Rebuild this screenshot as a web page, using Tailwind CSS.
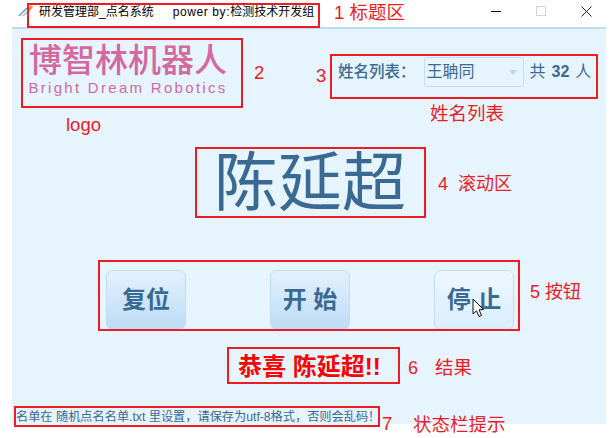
<!DOCTYPE html>
<html lang="zh">
<head>
  <meta charset="UTF-8" />
  <title>研发管理部_点名系统</title>
  <script src="https://cdn.jsdelivr.net/npm/@tailwindcss/browser@4"></script>
</head>
<body class="bg-white w-[611px] h-[438px] overflow-hidden relative font-['Liberation_Sans','Noto_Sans_CJK_SC',sans-serif]">

  <div class="ml-[12px] w-[594px]">
    <!-- 标题栏 -->
    <div class="h-[27px] flex items-center text-[12px] text-black">
      <svg class="w-[16px] h-[14px] ml-[6px] mr-[5px] -mt-[5px]" viewBox="0 0 16 14">
        <path d="M1 12 L9 4" stroke="#5b8fc7" stroke-width="1.2" fill="none"/>
        <path d="M5 12 L9 8" stroke="#9cb8d8" stroke-width="1.2" fill="none"/>
        <path d="M9 6 L13 1 L15 3 L11 8Z" fill="#e8913a"/>
      </svg>
      <span class="whitespace-nowrap -mt-[4px]">研发管理部_点名系统</span>
      <span class="ml-[19px] whitespace-nowrap -mt-[4px]"><span class="tracking-[0.6px]">power by:</span>检测技术开发组</span>
      <div class="ml-auto flex items-center -mt-[5px]">
        <div class="w-[10px] h-px bg-black mr-[35px]"></div>
        <div class="w-[10px] h-[10px] border border-gray-300 mr-[35px]"></div>
        <svg class="w-[11px] h-[11px] mr-[14px]" viewBox="0 0 11 11"><path d="M0.5 0.5 L10.5 10.5 M10.5 0.5 L0.5 10.5" stroke="#222" stroke-width="1" fill="none"/></svg>
      </div>
    </div>

    <!-- 主体 -->
    <div class="h-[397px] bg-[#e6f4fe] border-t-2 border-[#bcdcf5] flex flex-col">
      <div class="flex h-[82px] pt-[15px]">
        <div class="ml-[16px] w-[200px] flex flex-col items-center text-[#d4689f]">
          <div class="text-[33px] leading-[34px] font-medium whitespace-nowrap">博智林机器人</div>
          <div class="text-[15px] leading-[18px] tracking-[2.3px] font-medium whitespace-nowrap mt-[1px]">Bright Dream Robotics</div>
        </div>
        <div class="ml-[110px] mt-[13px] h-[30px] flex items-center text-[15.5px] text-[#3a6a94]">
          <span class="whitespace-nowrap font-medium">姓名列表：</span>
          <div class="ml-[8px] w-[100px] h-[30px] border border-[#c2dff6] rounded-[3px] flex items-center pl-[2px] pr-[6px] text-[16px]">
            <span class="whitespace-nowrap">王聃同</span>
            <div class="ml-auto w-0 h-0 border-x-[4px] border-x-transparent border-t-[5px] border-t-[#b6d8f2]"></div>
          </div>
          <div class="ml-[6px] flex gap-[6px] text-[16px] whitespace-nowrap">
            <span>共</span>
            <b>32</b>
            <span>人</span>
          </div>
        </div>
      </div>

      <!-- 滚动区 -->
      <div class="h-[77px] mt-[33px] flex items-center justify-center pl-[2px] text-[64px] leading-none text-[#3a6a94]">
        <span class="whitespace-nowrap">陈延超</span>
      </div>

      <!-- 按钮 -->
      <div class="flex gap-[84px] ml-[94px] mt-[49px]">
        <button class="w-[80px] h-[60px] rounded-[7px] border border-[#c0dcf5] bg-gradient-to-b from-[#e3f1fe] to-[#bddcf6] text-[24px] font-bold text-[#3a6a94]">复位</button>
        <button class="w-[80px] h-[60px] rounded-[7px] border border-[#c0dcf5] bg-gradient-to-b from-[#e3f1fe] to-[#bddcf6] text-[24px] font-bold text-[#3a6a94]">开 始</button>
        <button class="w-[80px] h-[60px] rounded-[7px] border border-[#c0dcf5] bg-gradient-to-b from-[#eef7ff] to-[#d9eeff] text-[24px] font-bold text-[#3a6a94]">停 止</button>
      </div>

      <!-- 结果 -->
      <div class="mt-[21px] ml-[226px] h-[32px] flex items-center text-[24px] font-bold text-[#ff0000] whitespace-nowrap">恭喜 陈延超!!</div>

      <!-- 状态栏 -->
      <div class="mt-auto h-[22px] pl-[4px] pt-[8px] flex items-center text-[12.2px] text-[#3a6a94] whitespace-nowrap">名单在 随机点名名单.txt 里设置，请保存为utf-8格式，否则会乱码！</div>
    </div>
  </div>

  <!-- 标注：红框与说明 -->
  <div class="absolute left-[27px] top-[3px] w-[293px] h-[25px] border-2 border-[#ed1c24]"></div>
  <div class="absolute left-[21px] top-[38px] w-[222px] h-[70px] border-2 border-[#ed1c24]"></div>
  <div class="absolute left-[330px] top-[54px] w-[268px] h-[45px] border-2 border-[#ed1c24]"></div>
  <div class="absolute left-[195px] top-[147px] w-[231px] h-[71px] border-2 border-[#ed1c24]"></div>
  <div class="absolute left-[98px] top-[260px] w-[422px] h-[71px] border-2 border-[#ed1c24]"></div>
  <div class="absolute left-[227px] top-[347px] w-[173px] h-[37px] border-2 border-[#ed1c24]"></div>
  <div class="absolute left-[14px] top-[406px] w-[366px] h-[21px] border-2 border-[#ed1c24]"></div>

  <div class="absolute left-[334px] top-[1px] text-[18.5px] leading-[24px] text-[#ed1c24] whitespace-nowrap">1 标题区</div>
  <div class="absolute left-[254px] top-[61px] text-[18.5px] leading-[24px] text-[#ed1c24]">2</div>
  <div class="absolute left-[316px] top-[64px] text-[18.5px] leading-[24px] text-[#ed1c24]">3</div>
  <div class="absolute left-[66px] top-[113px] text-[18.5px] leading-[24px] text-[#ed1c24]">logo</div>
  <div class="absolute left-[430px] top-[102px] text-[18.5px] leading-[24px] text-[#ed1c24] whitespace-nowrap">姓名列表</div>
  <div class="absolute left-[438px] top-[172px] text-[18px] leading-[24px] text-[#ed1c24] whitespace-nowrap">4&nbsp;&nbsp;滚动区</div>
  <div class="absolute left-[530px] top-[280px] text-[18px] leading-[24px] text-[#ed1c24] whitespace-nowrap">5 按钮</div>
  <div class="absolute left-[408px] top-[356px] text-[18px] leading-[24px] text-[#ed1c24]">6</div>
  <div class="absolute left-[435px] top-[356px] text-[18.5px] leading-[24px] text-[#ed1c24] whitespace-nowrap">结果</div>
  <div class="absolute left-[382px] top-[412px] text-[18.5px] leading-[24px] text-[#ed1c24]">7</div>
  <div class="absolute left-[413px] top-[413px] text-[18.5px] leading-[24px] text-[#ed1c24] whitespace-nowrap">状态栏提示</div>

  <!-- 鼠标指针 -->
  <svg class="absolute left-[472px] top-[298px] w-[13px] h-[20px]" viewBox="0 0 13 20">
    <path d="M1 1 L1 16 L4.5 12.8 L7 18.5 L9.5 17.4 L7 11.8 L11.5 11.5 Z" fill="#fff" stroke="#111" stroke-width="1"/>
  </svg>
</body>
</html>
